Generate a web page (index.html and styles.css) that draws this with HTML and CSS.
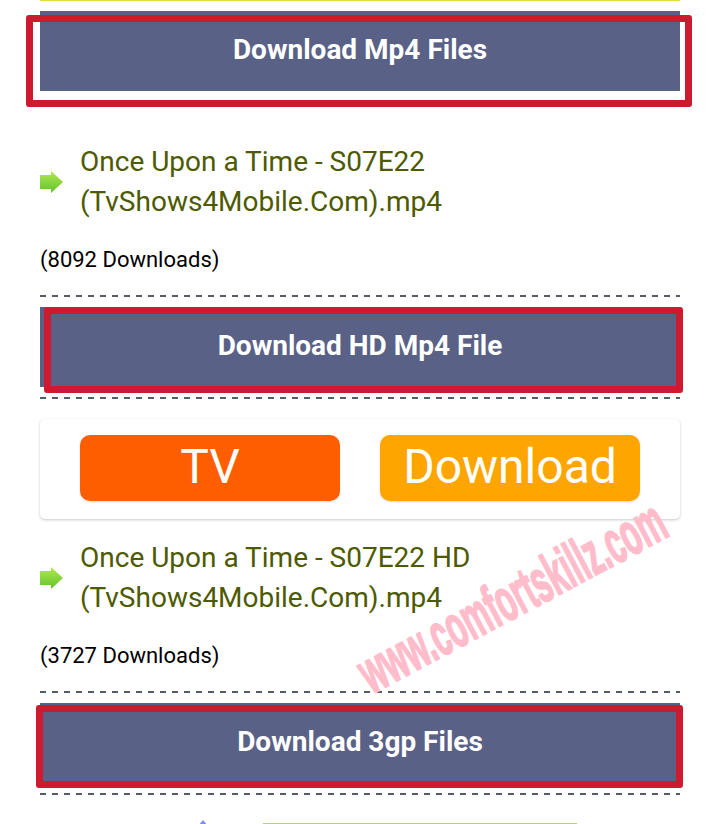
FILE: index.html
```html
<!DOCTYPE html>
<html lang="en">
<head>
<meta charset="utf-8">
<title>Download Files</title>
<link rel="stylesheet" href="styles.css">
</head>
<body>
<main class="page">
  <div class="top-rule"></div>
  <section class="heading heading-first">
    <h2>Download Mp4 Files</h2>
    <span class="mark mark-one"></span>
  </section>
  <div class="file file-first">
    <svg class="arrow" viewBox="0 0 24 24" aria-hidden="true"><defs><linearGradient id="g1" x1="0" y1="0" x2="0" y2="1"><stop offset="0" stop-color="#b0ea50"/><stop offset="1" stop-color="#62c22e"/></linearGradient></defs><path d="M0 5h11V1l12 11-12 11v-4H0z" fill="url(#g1)"/></svg>
    <a class="file-name">Once Upon a Time - S07E22<br>(TvShows4Mobile.Com).mp4</a>
  </div>
  <p class="count">(8092 Downloads)</p>
  <div class="dash dash-a"></div>
  <section class="heading">
    <h2>Download HD Mp4 File</h2>
    <span class="mark mark-two"></span>
  </section>
  <div class="dash dash-b"></div>
  <div class="card">
    <a class="cta cta-tv">TV</a>
    <a class="cta cta-dl">Download</a>
  </div>
  <div class="file file-second">
    <svg class="arrow" viewBox="0 0 24 24" aria-hidden="true"><defs><linearGradient id="g2" x1="0" y1="0" x2="0" y2="1"><stop offset="0" stop-color="#b0ea50"/><stop offset="1" stop-color="#62c22e"/></linearGradient></defs><path d="M0 5h11V1l12 11-12 11v-4H0z" fill="url(#g2)"/></svg>
    <a class="file-name">Once Upon a Time - S07E22 HD<br>(TvShows4Mobile.Com).mp4</a>
  </div>
  <p class="count">(3727 Downloads)</p>
  <div class="dash dash-a"></div>
  <section class="heading">
    <h2>Download 3gp Files</h2>
    <span class="mark mark-three"></span>
  </section>
  <div class="dash dash-b"></div>
  <div class="next">
    <span class="next-icon"></span>
    <span class="next-bar"></span>
  </div>
</main>
<div class="watermark">www.comfortskillz.com</div>
</body>
</html>
```
FILE: styles.css
```css
html, body {
  margin: 0;
  padding: 0;
  background: #fff;
}
body {
  position: relative;
  height: 824px;
  overflow: hidden;
  font-family: Roboto, "Liberation Sans", sans-serif;
}
.page {
  width: 640px;
  margin-left: 40px;
}
.top-rule {
  height: 1px;
  background: #e3dc3c;
}
.heading {
  position: relative;
  height: 80px;
  margin-top: 10px;
  background: #5a6187;
  display: flex;
  align-items: center;
  justify-content: center;
}
.heading h2 {
  margin: 0 0 2px;
  color: #fff;
  font-size: 28px;
  font-weight: 700;
  line-height: 30px;
}
.mark {
  position: absolute;
  box-sizing: border-box;
  border: 7px solid #cd1a2e;
  border-radius: 3px;
}
.mark-one {
  left: -14px;
  top: 4px;
  width: 666px;
  height: 92px;
}
.mark-two {
  left: 4px;
  top: 0;
  width: 639px;
  height: 86px;
}
.mark-three {
  left: -4px;
  top: 2px;
  width: 647px;
  height: 83px;
}
.file {
  display: flex;
  align-items: center;
  gap: 16px;
}
.file-first {
  margin-top: 51px;
}
.file-second {
  margin-top: 19px;
}
.arrow {
  width: 24px;
  height: 24px;
  flex: none;
  filter: blur(.7px);
}
.file-name {
  color: #4d5a00;
  font-size: 28px;
  line-height: 40px;
}
.count {
  margin: 22px 0 0;
  color: #000;
  font-size: 22px;
  line-height: 32px;
}
.dash {
  height: 2px;
  background: repeating-linear-gradient(90deg, #555b68 0 6px, transparent 6px 12px);
}
.dash-a {
  margin-top: 19px;
}
.dash-b {
  margin-top: 10px;
}
.card {
  box-sizing: border-box;
  height: 100px;
  margin-top: 20px;
  padding-bottom: 2px;
  display: flex;
  align-items: center;
  justify-content: center;
  gap: 40px;
  background: #fff;
  border-radius: 5px;
  box-shadow: 0 1px 3px rgba(0, 0, 0, .22);
}
.cta {
  width: 260px;
  height: 66px;
  border-radius: 10px;
  color: #fff;
  font-size: 48px;
  line-height: 64px;
  text-align: center;
  box-shadow: 0 1px 2px rgba(0, 0, 0, .15);
}
.cta-tv {
  background: #ff5e00;
}
.cta-dl {
  background: #ffa500;
}
.next {
  display: flex;
  align-items: flex-start;
  margin-top: 25px;
  height: 4px;
}
.next-icon {
  width: 0;
  height: 0;
  margin-left: 158px;
  border-left: 5px solid transparent;
  border-right: 5px solid transparent;
  border-bottom: 6px solid #7f8ef0;
}
.next-bar {
  width: 314px;
  height: 2px;
  margin: 3px 0 0 55px;
  background: #b5d279;
}
.watermark {
  position: absolute;
  left: 512px;
  top: 597px;
  color: #ffbccb;
  font-family: "Liberation Sans Narrow", "Liberation Sans", sans-serif;
  font-size: 60px;
  font-weight: 700;
  line-height: 60px;
  white-space: nowrap;
  -webkit-text-stroke: 2px #ffbccb;
  transform: translate(-50%, -50%) rotate(-28deg) scaleX(.51);
}
```
